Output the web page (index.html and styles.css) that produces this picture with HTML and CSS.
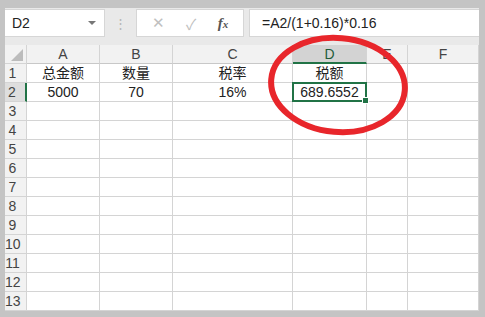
FILE: index.html
```html
<!DOCTYPE html>
<html lang="zh-CN">
<head>
    <meta charset="UTF-8">
    <meta name="viewport" content="width=device-width, initial-scale=1.0">
    <link rel="stylesheet" href="styles.css">
    <title>税额</title>
</head>
<body>
    <div class="window">
        <div class="toolbar">
            <div class="namebox">
                <span>D2</span>
                <span class="caret"></span>
            </div>
            <div class="grip">&#8942;</div>
            <div class="fx-buttons">
                <span class="fx-btn">&#10005;</span>
                <span class="fx-btn">&#10003;</span>
                <span class="fx-btn fx"><i>f</i><i class="x">x</i></span>
            </div>
            <div class="formula">=A2/(1+0.16)*0.16</div>
        </div>

        <div class="sheet">
            <div class="grid">
                <div class="corner"></div>
                <div class="colhdr">A</div>
                <div class="colhdr">B</div>
                <div class="colhdr">C</div>
                <div class="colhdr active">D</div>
                <div class="colhdr">E</div>
                <div class="colhdr">F</div>

                <div class="rowhdr">1</div>
                <div class="c">总金额</div>
                <div class="c">数量</div>
                <div class="c">税率</div>
                <div class="c">税额</div>
                <div class="c"></div>
                <div class="c"></div>

                <div class="rowhdr active">2</div>
                <div class="c">5000</div>
                <div class="c">70</div>
                <div class="c">16%</div>
                <div class="c selected">689.6552<span class="handle"></span></div>
                <div class="c"></div>
                <div class="c"></div>

                <div class="rowhdr">3</div><div class="c"></div><div class="c"></div><div class="c"></div><div class="c"></div><div class="c"></div><div class="c"></div>
                <div class="rowhdr">4</div><div class="c"></div><div class="c"></div><div class="c"></div><div class="c"></div><div class="c"></div><div class="c"></div>
                <div class="rowhdr">5</div><div class="c"></div><div class="c"></div><div class="c"></div><div class="c"></div><div class="c"></div><div class="c"></div>
                <div class="rowhdr">6</div><div class="c"></div><div class="c"></div><div class="c"></div><div class="c"></div><div class="c"></div><div class="c"></div>
                <div class="rowhdr">7</div><div class="c"></div><div class="c"></div><div class="c"></div><div class="c"></div><div class="c"></div><div class="c"></div>
                <div class="rowhdr">8</div><div class="c"></div><div class="c"></div><div class="c"></div><div class="c"></div><div class="c"></div><div class="c"></div>
                <div class="rowhdr">9</div><div class="c"></div><div class="c"></div><div class="c"></div><div class="c"></div><div class="c"></div><div class="c"></div>
                <div class="rowhdr">10</div><div class="c"></div><div class="c"></div><div class="c"></div><div class="c"></div><div class="c"></div><div class="c"></div>
                <div class="rowhdr">11</div><div class="c"></div><div class="c"></div><div class="c"></div><div class="c"></div><div class="c"></div><div class="c"></div>
                <div class="rowhdr">12</div><div class="c"></div><div class="c"></div><div class="c"></div><div class="c"></div><div class="c"></div><div class="c"></div>
                <div class="rowhdr">13</div><div class="c"></div><div class="c"></div><div class="c"></div><div class="c"></div><div class="c"></div><div class="c"></div>
            </div>

            <!-- red mark drawn around the result -->
            <svg class="mark" width="474" height="120" viewBox="0 0 474 120">
                <ellipse cx="333" cy="52" rx="67" ry="47" fill="none" stroke="#e8262b" stroke-width="6" transform="rotate(5 333 52)"/>
            </svg>
        </div>
    </div>
</body>
</html>
```

FILE: styles.css
```css
body {
    margin: 0;
    background: #c4c4c4;
    font-family: "Liberation Sans", "Noto Sans CJK SC", sans-serif;
    font-size: 14px;
    color: #222;
}
.window {
    margin: 8px 6px 0 5px;
    width: 474px;
    background: #e9e9e9;
}
.toolbar {
    display: flex;
    align-items: center;
    height: 37px;
    padding-bottom: 8px;
    padding-top: 1px;
    box-sizing: border-box;
}
.namebox {
    display: flex;
    align-items: center;
    justify-content: space-between;
    width: 100px;
    height: 28px;
    padding: 0 8px 0 7px;
    box-sizing: border-box;
    background: #fff;
    border: 1px solid #d6d6d6;
    border-left: none;
}
.caret {
    width: 0;
    height: 0;
    border-left: 4px solid transparent;
    border-right: 4px solid transparent;
    border-top: 4px solid #777;
}
.grip {
    width: 31px;
    text-align: center;
    color: #b5b5b5;
    font-size: 13px;
}
.fx-buttons {
    display: flex;
    align-items: center;
    justify-content: space-around;
    width: 108px;
    height: 28px;
    box-sizing: border-box;
    background: #fff;
    border: 1px solid #d6d6d6;
    padding: 0 4px;
}
.fx-btn {
    color: #c0c0c0;
    font-size: 15px;
}
.fx {
    color: #555;
    font-family: "Liberation Serif", serif;
    font-size: 15px;
    font-weight: bold;
}
.fx .x {
    font-size: 11px;
}
.formula {
    flex: 1;
    height: 28px;
    line-height: 26px;
    margin-left: 5px;
    padding-left: 12px;
    box-sizing: border-box;
    background: #fff;
    border: 1px solid #d6d6d6;
    border-right: none;
}
.sheet {
    position: relative;
    background: #fff;
}
.grid {
    display: grid;
    grid-template-columns: 22px 73px 73px 120px 74px 41px 71px;
    grid-auto-rows: 19px;
}
.grid > div {
    box-sizing: border-box;
    border-right: 1px solid #d4d4d4;
    border-bottom: 1px solid #d4d4d4;
    line-height: 18px;
    text-align: center;
    white-space: nowrap;
}
.corner {
    position: relative;
    background: #f2f2f2;
}
.corner::after {
    content: "";
    position: absolute;
    right: 3px;
    bottom: 2px;
    border-left: 12px solid transparent;
    border-bottom: 12px solid #bcbcbc;
}
.colhdr {
    background: #f2f2f2;
    color: #444;
    border-bottom-color: #c8c8c8 !important;
}
.colhdr.active {
    background: #d3d3d3;
    color: #1f5c39;
    border-bottom: 2px solid #217346 !important;
}
.rowhdr {
    background: #f2f2f2;
    color: #444;
    padding-right: 6px;
}
.rowhdr.active {
    background: #dedede;
    border-right: 2px solid #217346 !important;
}
.grid > .selected {
    position: relative;
    border: 2px solid #217346;
    margin: -1px 0 0 -1px;
    width: 75px;
    height: 20px;
    line-height: 16px;
}
.handle {
    position: absolute;
    right: -4px;
    bottom: -4px;
    width: 5px;
    height: 5px;
    background: #217346;
    border: 1px solid #fff;
}
.mark {
    position: absolute;
    left: 0;
    top: -12px;
    pointer-events: none;
}
```
